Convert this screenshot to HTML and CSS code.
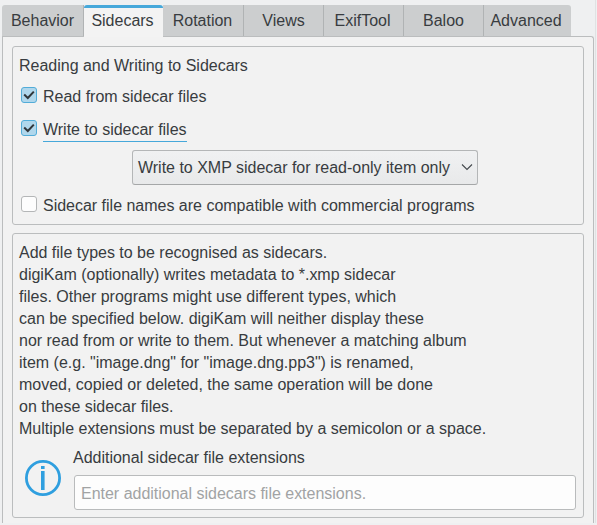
FILE: index.html
```html
<!DOCTYPE html>
<html lang="en">
<head>
<meta charset="utf-8">
<title>Metadata settings</title>
<link rel="stylesheet" href="styles.css">
</head>
<body>
<main class="window">
  <nav class="tabs">
    <span class="tab first">Behavior</span>
    <span class="tab active">Sidecars</span>
    <span class="tab rotation">Rotation</span>
    <span class="tab">Views</span>
    <span class="tab tool">ExifTool</span>
    <span class="tab">Baloo</span>
    <span class="tab last">Advanced</span>
  </nav>
  <div class="panel">
    <section class="group sidecars">
      <h2 class="title">Reading and Writing to Sidecars</h2>
      <div class="option">
        <span class="check on"><svg viewBox="0 0 16 16"><path d="M3.2 7.6 6.8 11 12.8 4.6"/></svg></span>
        <span class="label">Read from sidecar files</span>
      </div>
      <div class="option write">
        <span class="check on"><svg viewBox="0 0 16 16"><path d="M3.2 7.6 6.8 11 12.8 4.6"/></svg></span>
        <span class="label focused">Write to sidecar files</span>
      </div>
      <div class="select">
        <span>Write to XMP sidecar for read-only item only</span>
        <svg class="arrow" viewBox="0 0 12 8"><path d="M1 1.5 6 6.5 11 1.5"/></svg>
      </div>
      <div class="option">
        <span class="check"></span>
        <span class="label">Sidecar file names are compatible with commercial programs</span>
      </div>
    </section>
    <section class="group extensions">
      <p class="help">Add file types to be recognised as sidecars.<br>
        digiKam (optionally) writes metadata to *.xmp sidecar<br>
        files. Other programs might use different types, which<br>
        can be specified below. digiKam will neither display these<br>
        nor read from or write to them. But whenever a matching album<br>
        item (e.g. "image.dng" for "image.dng.pp3") is renamed,<br>
        moved, copied or deleted, the same operation will be done<br>
        on these sidecar files.<br>
        Multiple extensions must be separated by a semicolon or a space.</p>
      <div class="entry">
        <svg class="info" viewBox="0 0 36 36"><circle cx="18" cy="18" r="16.6"/><path d="M16 6h3.6v3H16zM16 11h3.6v19H16z"/></svg>
        <div class="field">
          <span class="caption">Additional sidecar file extensions</span>
          <div class="input">Enter additional sidecars file extensions.</div>
        </div>
      </div>
    </section>
  </div>
</main>
</body>
</html>
```

FILE: styles.css
```css
* { box-sizing: border-box; }
body {
  margin: 0;
  background: #eff0f1;
  color: #383c40;
  font: 16px/22px "Liberation Sans", Arial, sans-serif;
  letter-spacing: -0.01px;
}
.window {
  width: 596px;
  height: 523px;
  padding: 5px 1px 0 2px;
  border-right: 1px solid #e0e2e3;
  display: flex;
  flex-direction: column;
}
.tabs { display: flex; height: 32px; margin-bottom: -1px; }
.tab {
  width: 80px;
  padding-top: 5px;
  text-align: center;
  background: #cccecf;
  border-right: 1px solid #b0b3b4;
  border-bottom: 1px solid #b9bbbc;
}
.first { width: 82px; border-radius: 3px 0 0 0; }
.active {
  position: relative;
  width: 79px;
  padding: 2px 2px 0 0;
  background: #f3f3f3;
  border-top: 3px solid #46a8da;
  border-right: 0;
  border-bottom: 0;
  border-radius: 3px 3px 0 0;
}
.rotation { width: 81px; padding-right: 1px; }
.tool { padding-right: 2px; }
.last { width: 87px; padding-right: 3px; border-right: 0; border-radius: 0 3px 0 0; }
.panel {
  flex: 1;
  width: 592px;
  padding: 9px 9px 0;
  background: #f2f2f2;
  border: 1px solid #bbbdbe;
  border-bottom: 0;
  border-radius: 0 3px 0 0;
}
.group {
  width: 572px;
  padding: 8px 6px 0;
  border: 1px solid #bbbdbe;
  border-radius: 3px;
}
.sidecars { height: 179px; }
.extensions { height: 285px; margin-top: 8px; }
.title { margin: 0 0 9px; font: inherit; }
.option { display: flex; align-items: flex-start; gap: 6px; height: 22px; padding-left: 2px; }
.write { height: 24px; margin: 11px 0 7px; }
.check {
  width: 16px;
  height: 16px;
  margin-top: 1px;
  background: #fdfdfd;
  border: 1px solid #b4b6b7;
  border-radius: 3px;
}
.on { background: #b0d7ec; border-color: #52acd8; }
.check svg { display: block; width: 16px; height: 16px; margin: -1px; }
.check path { fill: none; stroke: #30363b; stroke-width: 2; }
.focused { height: 23px; border-bottom: 1px solid #46a8da; }
.select {
  display: flex;
  align-items: center;
  justify-content: space-between;
  width: 346px;
  height: 35px;
  margin: 0 0 10px 113px;
  padding: 0 4px 0 5px;
  background: linear-gradient(#f0f1f2, #e8e9ea);
  border: 1px solid #b4b6b7;
  border-bottom-color: #a5a7a8;
  border-radius: 3px;
}
.arrow { width: 12px; height: 8px; margin-bottom: 2px; fill: none; stroke: #43484c; stroke-width: 1.1; }
.help { margin: 0; white-space: nowrap; }
.entry { display: flex; gap: 12px; padding: 7px 0 0 6px; }
.info { width: 36px; height: 36px; margin-top: 13px; fill: #2f9fdf; }
.info circle { fill: none; stroke: #2f9fdf; stroke-width: 2.8; }
.caption { display: block; }
.input {
  width: 502px;
  height: 35px;
  margin: 6px 0 0 1px;
  padding: 7px 6px;
  color: #a1a3a4;
  background: #fdfdfd;
  border: 1px solid #b9bbbc;
  border-radius: 3px;
}
```
